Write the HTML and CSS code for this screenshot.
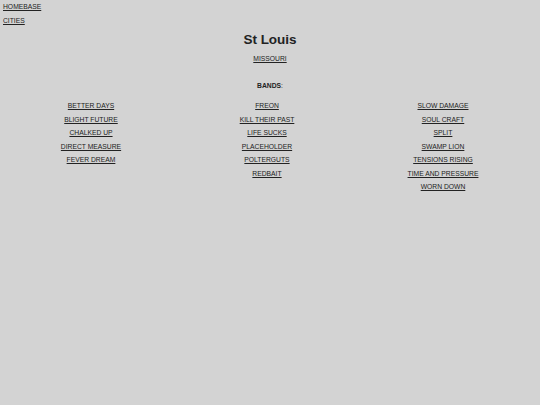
FILE: index.html
```html
<!DOCTYPE html>
<html>
<head>
<title>St Louis</title>
<link rel="stylesheet" href="styles.css">
<meta name="viewport" content="width=device-width, initial-scale=1.0">
</head>
<body>
<div class="nav">
  <a href="#">HOMEBASE</a>
  <a href="#">CITIES</a>
</div>
<h1>St Louis</h1>
<div class="state"><a href="#">MISSOURI</a></div>
<div class="label"><b>BANDS</b>:</div>
<div class="bands">
  <div class="col">
    <a href="#">BETTER DAYS</a>
    <a href="#">BLIGHT FUTURE</a>
    <a href="#">CHALKED UP</a>
    <a href="#">DIRECT MEASURE</a>
    <a href="#">FEVER DREAM</a>
  </div>
  <div class="col">
    <a href="#">FREON</a>
    <a href="#">KILL THEIR PAST</a>
    <a href="#">LIFE SUCKS</a>
    <a href="#">PLACEHOLDER</a>
    <a href="#">POLTERGUTS</a>
    <a href="#">REDBAIT</a>
  </div>
  <div class="col">
    <a href="#">SLOW DAMAGE</a>
    <a href="#">SOUL CRAFT</a>
    <a href="#">SPLIT</a>
    <a href="#">SWAMP LION</a>
    <a href="#">TENSIONS RISING</a>
    <a href="#">TIME AND PRESSURE</a>
    <a href="#">WORN DOWN</a>
  </div>
</div>
</body>
</html>
```

FILE: styles.css
```css
body {
  margin: 0;
  padding: 0 3px;
  background-color: #d3d3d3;
  color: #222;
  font-family: "Liberation Sans", Arial, sans-serif;
  font-size: 6.75px;
  line-height: 13.5px;
}
a {
  color: #222;
}
.nav {
  display: flex;
  flex-direction: column;
  align-items: flex-start;
}
h1 {
  margin: 5px 0 0;
  text-align: center;
  font-size: 13.5px;
  line-height: 16px;
}
.state {
  margin-top: 4px;
  text-align: center;
}
.label {
  margin-top: 13px;
  text-align: center;
}
.bands {
  display: grid;
  grid-template-columns: 176px 176px 176px;
  margin-top: 7px;
}
.col {
  display: flex;
  flex-direction: column;
  align-items: center;
}
```
